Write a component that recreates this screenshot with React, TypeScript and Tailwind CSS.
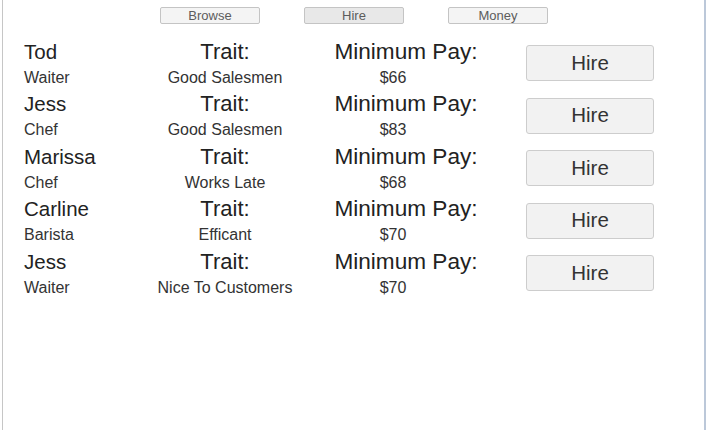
import type React from 'react';

type Applicant = {
	name: string;
	job: string;
	trait: string;
	pay: number;
};

const applicants: Applicant[] = [
	{ name: 'Tod', job: 'Waiter', trait: 'Good Salesmen', pay: 66 },
	{ name: 'Jess', job: 'Chef', trait: 'Good Salesmen', pay: 83 },
	{ name: 'Marissa', job: 'Chef', trait: 'Works Late', pay: 68 },
	{ name: 'Carline', job: 'Barista', trait: 'Efficant', pay: 70 },
	{ name: 'Jess', job: 'Waiter', trait: 'Nice To Customers', pay: 70 },
];

const tabs = ['Browse', 'Hire', 'Money'];

const App: React.FC = () => {
	return (
		<div
			className="flex h-[430px] w-[707px] overflow-hidden bg-white"
			style={{ fontFamily: '"Liberation Sans", Arial, sans-serif' }}
		>
			<div className="ml-[2px] mr-[1px] flex-1 border-l border-r-2 border-l-[#c6c6c6] border-r-[#bcc8d9]">
				{/* Tabs */}
				<div className="flex justify-center gap-[44px] pt-[7px] pl-[1px]">
					{tabs.map((tab) => (
						<button
							key={tab}
							className={`h-[17px] w-[100px] rounded-[2px] border border-[#c4c4c4] text-[13px] leading-[15px] text-[#5c5c5c] ${
								tab === 'Hire' ? 'bg-[#e8e8e8]' : 'bg-[#f4f4f4]'
							}`}
						>
							{tab}
						</button>
					))}
				</div>

				{/* Applicants */}
				<div className="mt-[15.5px]">
					{applicants.map((a, i) => (
						<div key={i} className="flex h-[52.5px] items-start">
							<div className="w-[147px] pl-[21px]">
								<div className="text-[20.5px] leading-[24px] text-[#222]">{a.name}</div>
								<div className="mt-[2px] text-[16px] leading-[24px] text-[#333]">{a.job}</div>
							</div>
							<div className="w-[150px] text-center">
								<div className="text-[22px] leading-[24px] text-[#222]">Trait:</div>
								<div className="mt-[2px] text-[16px] leading-[24px] text-[#333]">{a.trait}</div>
							</div>
							<div className="w-[212px] text-center">
								<div className="text-[22.6px] leading-[24px] text-[#222]">Minimum Pay:</div>
								<div className="mt-[2px] pr-[26px] text-[16px] leading-[24px] text-[#333]">${a.pay}</div>
							</div>
							<button className="mt-[5.5px] ml-[14px] h-[36px] w-[128px] rounded-[3px] border border-[#cdcdcd] bg-[#f2f2f2] text-[20.5px] text-[#333]">
								Hire
							</button>
						</div>
					))}
				</div>
			</div>
		</div>
	);
};

export default App;
